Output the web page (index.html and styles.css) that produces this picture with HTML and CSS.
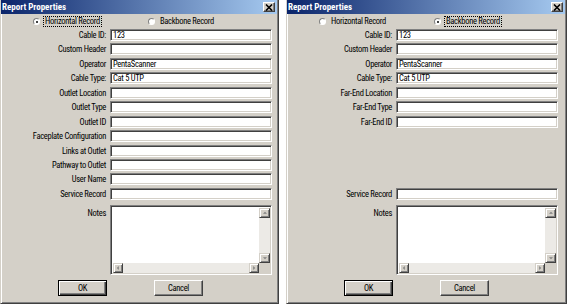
FILE: index.html
```html
<!DOCTYPE html>
<html lang="en">
<head>
  <meta charset="UTF-8">
  <meta name="viewport" content="width=device-width, initial-scale=1.0">
  <title>Report Properties</title>
  <link rel="stylesheet" href="styles.css">
</head>
<body>
  <div class="desk">
    <!-- horizontal -->
    <div class="dialog left">
      <div class="titlebar">
        <span class="title">Report Properties</span>
        <span class="close"><svg width="8" height="7" viewBox="0 0 8 7"><path d="M1 0.5 L7 6.5 M7 0.5 L1 6.5" stroke="#000" stroke-width="1.6"/></svg></span>
      </div>
      <div class="kind">
        <label class="radio"><span class="dot on"></span><span class="cap focus">Horizontal Record</span></label>
        <label class="radio"><span class="dot"></span><span class="cap">Backbone Record</span></label>
      </div>
      <div class="fields">
        <div class="row"><span class="lbl">Cable ID:</span><input class="field" type="text" value="123"></div>
        <div class="row"><span class="lbl">Custom Header</span><input class="field" type="text"></div>
        <div class="row"><span class="lbl">Operator</span><input class="field" type="text" value="PentaScanner"></div>
        <div class="row"><span class="lbl">Cable Type:</span><input class="field" type="text" value="Cat 5 UTP"></div>
        <div class="row"><span class="lbl">Outlet Location</span><input class="field" type="text"></div>
        <div class="row"><span class="lbl">Outlet Type</span><input class="field" type="text"></div>
        <div class="row"><span class="lbl">Outlet ID</span><input class="field" type="text"></div>
        <div class="row"><span class="lbl">Faceplate Configuration</span><input class="field" type="text"></div>
        <div class="row"><span class="lbl">Links at Outlet</span><input class="field" type="text"></div>
        <div class="row"><span class="lbl">Pathway to Outlet</span><input class="field" type="text"></div>
        <div class="row"><span class="lbl">User Name</span><input class="field" type="text"></div>
        <div class="row"><span class="lbl">Service Record</span><input class="field" type="text"></div>
      </div>
      <div class="row notes-row">
        <span class="lbl">Notes</span>
        <div class="notes">
          <div class="notes-text"></div>
          <div class="vbar"><span class="sbtn up"></span><span class="track"></span><span class="sbtn down"></span></div>
          <div class="hbar"><span class="sbtn lt"></span><span class="track"></span><span class="sbtn rt"></span></div>
          <div class="corner"></div>
        </div>
      </div>
      <div class="buttons">
        <button class="btn default">OK</button>
        <button class="btn">Cancel</button>
      </div>
    </div>

    <!-- backbone -->
    <div class="dialog right">
      <div class="titlebar">
        <span class="title">Report Properties</span>
        <span class="close"><svg width="8" height="7" viewBox="0 0 8 7"><path d="M1 0.5 L7 6.5 M7 0.5 L1 6.5" stroke="#000" stroke-width="1.6"/></svg></span>
      </div>
      <div class="kind">
        <label class="radio"><span class="dot"></span><span class="cap">Horizontal Record</span></label>
        <label class="radio"><span class="dot on"></span><span class="cap focus">Backbone Record</span></label>
      </div>
      <div class="fields">
        <div class="row"><span class="lbl">Cable ID:</span><input class="field" type="text" value="123"></div>
        <div class="row"><span class="lbl">Custom Header</span><input class="field" type="text"></div>
        <div class="row"><span class="lbl">Operator</span><input class="field" type="text" value="PentaScanner"></div>
        <div class="row"><span class="lbl">Cable Type:</span><input class="field" type="text" value="Cat 5 UTP"></div>
        <div class="row"><span class="lbl">Far-End Location</span><input class="field" type="text"></div>
        <div class="row"><span class="lbl">Far-End Type</span><input class="field" type="text"></div>
        <div class="row"><span class="lbl">Far-End ID</span><input class="field" type="text"></div>
        <div class="spacer"></div>
        <div class="row"><span class="lbl">Service Record</span><input class="field" type="text"></div>
      </div>
      <div class="row notes-row">
        <span class="lbl">Notes</span>
        <div class="notes">
          <div class="notes-text"></div>
          <div class="vbar"><span class="sbtn up"></span><span class="track"></span><span class="sbtn down"></span></div>
          <div class="hbar"><span class="sbtn lt"></span><span class="track"></span><span class="sbtn rt"></span></div>
          <div class="corner"></div>
        </div>
      </div>
      <div class="buttons">
        <button class="btn default">OK</button>
        <button class="btn">Cancel</button>
      </div>
    </div>
  </div>
</body>
</html>
```

FILE: styles.css
```css
/* report properties dialogs */

*{
  margin: 0;
  padding: 0;
  box-sizing: border-box;
}

:root{
  --face:#d4d0c8;
  --shadow:#808080;
  --dark:#404040;
  --light:#fff;
}

body{
  background: #fff;
  font-family: "Roboto Condensed", "Liberation Sans", Arial, sans-serif;
  font-size: 8.5px;
  letter-spacing: -0.3px;
  color: #000;
}

.desk{
  display: flex;
  gap: 7px;
  height: 304px;
}

/* ventana */
.dialog{
  width: 279px;
  height: 304px;
  background: var(--face);
  border-left: 1px solid var(--face);
  border-right: 1px solid var(--dark);
  border-bottom: 1px solid var(--dark);
  box-shadow: inset 1px 0 var(--light), inset -1px -1px var(--shadow);
  display: flex;
  flex-direction: column;
}

.dialog.right{
  width: 281px;
}

.titlebar{
  height: 14px;
  margin: 0 1px 0 0;
  background: linear-gradient(to right, #0a246a, #a6caf0);
  display: flex;
  align-items: center;
  justify-content: space-between;
  padding: 0 2px 0 1px;
}

.title{
  color: #fff;
  font-weight: bold;
  font-size: 9px;
  letter-spacing: 0;
}

.close{
  width: 12px;
  height: 10px;
  background: var(--face);
  border: 1px solid;
  border-color: var(--light) var(--dark) var(--dark) var(--light);
  box-shadow: inset -1px -1px var(--shadow);
  display: flex;
  align-items: center;
  justify-content: center;
}

/* radios */
.kind{
  display: grid;
  grid-template-columns: 115px 115px;
  padding-left: 32px;
  margin-top: 2px;
  height: 11px;
  align-items: center;
}

.radio{
  display: flex;
  align-items: center;
  gap: 3px;
}

.dot{
  width: 7px;
  height: 7px;
  border-radius: 50%;
  background: #fff;
  border: 1px solid;
  border-color: var(--shadow) var(--light) var(--light) var(--shadow);
  position: relative;
}

.dot.on::after{
  content: "";
  position: absolute;
  left: 1.5px;
  top: 1.5px;
  width: 2px;
  height: 2px;
  border-radius: 50%;
  background: #000;
}

.cap{
  padding: 0 1px;
  border: 1px dotted transparent;
  line-height: 9px;
}

.cap.focus{
  border-color: #000;
}

/* filas */
.fields{
  display: flex;
  flex-direction: column;
  gap: 2.45px;
  margin-top: 2px;
}

.row{
  display: grid;
  grid-template-columns: 105px 162px;
  column-gap: 4px;
  align-items: center;
}

.lbl{
  text-align: right;
  white-space: nowrap;
}

.field{
  height: 12px;
  width: 162px;
  font: inherit;
  letter-spacing: inherit;
  padding: 0 2px;
  background: #fff;
  border: 1px solid;
  border-color: var(--shadow) var(--light) var(--light) var(--shadow);
  box-shadow: inset 1px 1px var(--dark), inset -1px -1px var(--face);
  outline: none;
}

.spacer{
  height: 55.35px;
}

/* notas */
.notes-row{
  margin-top: 5px;
  align-items: start;
}

.notes-row .lbl{
  padding-top: 3px;
}

.notes{
  height: 70px;
  border: 1px solid;
  border-color: var(--shadow) var(--light) var(--light) var(--shadow);
  box-shadow: inset 1px 1px var(--dark), inset -1px -1px var(--face);
  padding: 2px 1px 1px 2px;
  display: grid;
  grid-template-columns: 1fr 11px;
  grid-template-rows: 1fr 10px;
  background: #fff;
}

.notes-text{
  background: #fff;
}

.vbar{
  display: flex;
  flex-direction: column;
}

.hbar{
  display: flex;
}

.track{
  flex: 1;
  background: #eceae6;
}

.sbtn{
  width: 11px;
  height: 10px;
  background: var(--face);
  border: 1px solid;
  border-color: var(--face) var(--dark) var(--dark) var(--face);
  box-shadow: inset 1px 1px var(--light), inset -1px -1px var(--shadow);
  position: relative;
}

.hbar .sbtn{
  width: 10px;
}

.sbtn::after{
  content: "";
  position: absolute;
  left: 50%;
  top: 50%;
  width: 0;
  height: 0;
  border: 2px solid transparent;
}

.sbtn.up::after{
  border-bottom-color: #808080;
  border-top-width: 0;
  transform: translate(-50%, -60%);
}

.sbtn.down::after{
  border-top-color: #808080;
  border-bottom-width: 0;
  transform: translate(-50%, -40%);
}

.sbtn.lt::after{
  border-right-color: #808080;
  border-left-width: 0;
  transform: translate(-60%, -50%);
}

.sbtn.rt::after{
  border-left-color: #808080;
  border-right-width: 0;
  transform: translate(-40%, -50%);
}

.corner{
  background: var(--face);
}

/* botones */
.buttons{
  display: flex;
  gap: 47px;
  padding-left: 57px;
  margin-top: 5px;
}

.btn{
  width: 49px;
  height: 16px;
  font: inherit;
  letter-spacing: inherit;
  background: var(--face);
  border: 1px solid;
  border-color: var(--light) var(--dark) var(--dark) var(--light);
  box-shadow: inset -1px -1px var(--shadow);
}

.btn.default{
  border-color: #000;
  box-shadow: inset 1px 1px var(--light), inset -1px -1px var(--dark), inset -2px -2px var(--shadow);
}
```
